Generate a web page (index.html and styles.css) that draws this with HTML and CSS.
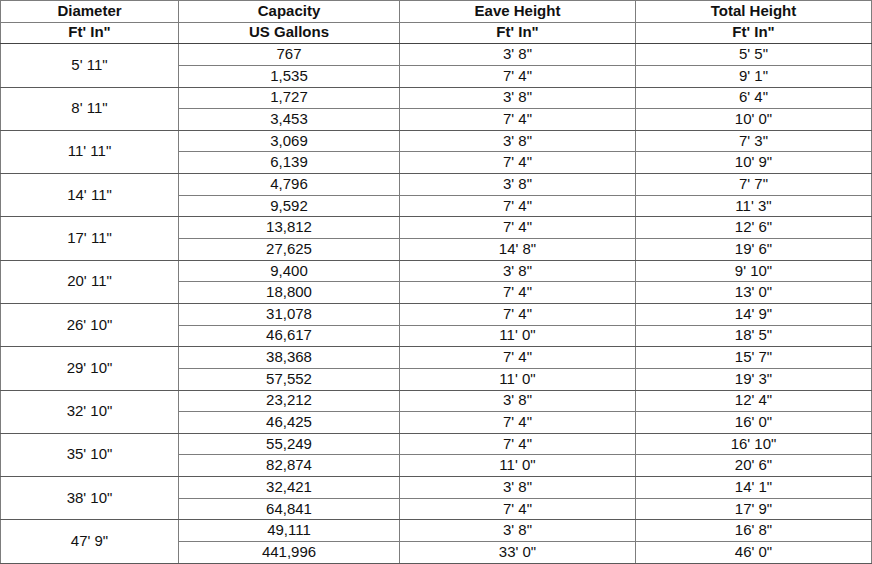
FILE: index.html
```html
<!DOCTYPE html>
<html>
<head>
<meta charset="utf-8">
<link rel="stylesheet" href="styles.css">
</head>
<body>
<table class="tank">
<colgroup><col class="c1"><col class="c2"><col class="c3"><col class="c4"></colgroup>
<thead>
<tr class="titles"><th>Diameter</th><th>Capacity</th><th>Eave Height</th><th>Total Height</th></tr>
<tr class="units"><th>Ft' In"</th><th>US Gallons</th><th>Ft' In"</th><th>Ft' In"</th></tr>
</thead>
<tbody>
<tr><td rowspan="2">5' 11"</td><td>767</td><td>3' 8"</td><td>5' 5"</td></tr>
<tr class="end"><td>1,535</td><td>7' 4"</td><td>9' 1"</td></tr>
<tr><td rowspan="2">8' 11"</td><td>1,727</td><td>3' 8"</td><td>6' 4"</td></tr>
<tr class="end"><td>3,453</td><td>7' 4"</td><td>10' 0"</td></tr>
<tr><td rowspan="2">11' 11"</td><td>3,069</td><td>3' 8"</td><td>7' 3"</td></tr>
<tr class="end"><td>6,139</td><td>7' 4"</td><td>10' 9"</td></tr>
<tr><td rowspan="2">14' 11"</td><td>4,796</td><td>3' 8"</td><td>7' 7"</td></tr>
<tr class="end"><td>9,592</td><td>7' 4"</td><td>11' 3"</td></tr>
<tr><td rowspan="2">17' 11"</td><td>13,812</td><td>7' 4"</td><td>12' 6"</td></tr>
<tr class="end"><td>27,625</td><td>14' 8"</td><td>19' 6"</td></tr>
<tr><td rowspan="2">20' 11"</td><td>9,400</td><td>3' 8"</td><td>9' 10"</td></tr>
<tr class="end"><td>18,800</td><td>7' 4"</td><td>13' 0"</td></tr>
<tr><td rowspan="2">26' 10"</td><td>31,078</td><td>7' 4"</td><td>14' 9"</td></tr>
<tr class="end"><td>46,617</td><td>11' 0"</td><td>18' 5"</td></tr>
<tr><td rowspan="2">29' 10"</td><td>38,368</td><td>7' 4"</td><td>15' 7"</td></tr>
<tr class="end"><td>57,552</td><td>11' 0"</td><td>19' 3"</td></tr>
<tr><td rowspan="2">32' 10"</td><td>23,212</td><td>3' 8"</td><td>12' 4"</td></tr>
<tr class="end"><td>46,425</td><td>7' 4"</td><td>16' 0"</td></tr>
<tr><td rowspan="2">35' 10"</td><td>55,249</td><td>7' 4"</td><td>16' 10"</td></tr>
<tr class="end"><td>82,874</td><td>11' 0"</td><td>20' 6"</td></tr>
<tr><td rowspan="2">38' 10"</td><td>32,421</td><td>3' 8"</td><td>14' 1"</td></tr>
<tr class="end"><td>64,841</td><td>7' 4"</td><td>17' 9"</td></tr>
<tr><td rowspan="2">47' 9"</td><td>49,111</td><td>3' 8"</td><td>16' 8"</td></tr>
<tr class="end"><td>441,996</td><td>33' 0"</td><td>46' 0"</td></tr>
</tbody>
</table>
</body>
</html>
```
FILE: styles.css
```css
html, body {
  margin: 0;
  padding: 0;
  background: #ffffff;
}
.tank {
  border-collapse: collapse;
  table-layout: fixed;
  width: 871px;
  font-family: "Liberation Sans", Arial, sans-serif;
  font-size: 15px;
  color: #111111;
  border-top: 1px solid #333333;
  border-left: 1px solid #333333;
  border-right: 1px solid #777777;
  border-bottom: 1px solid #777777;
}
.c1 { width: 178px; }
.c2 { width: 221px; }
.c3 { width: 236px; }
.c4 { width: 236px; }
.tank tr {
  height: 21.65px;
}
.tank th,
.tank td {
  border: 1px solid #7d7d7d;
  padding: 0 0 2px 0;
  text-align: center;
  vertical-align: middle;
  line-height: 17px;
}
.tank th {
  font-weight: bold;
}
.tank tr.titles th {
  border-bottom: 1px solid #7d7d7d;
}
.tank tr.units th {
  border-bottom: 1px solid #444444;
}
.tank tr.end td {
  border-bottom: 1px solid #5a5a5a;
}
.tank td[rowspan] {
  border-bottom: 1px solid #5a5a5a;
}
```
